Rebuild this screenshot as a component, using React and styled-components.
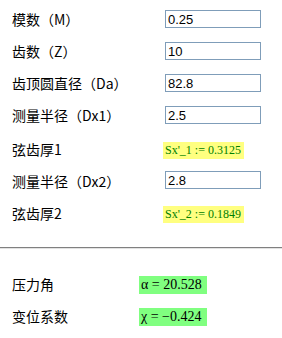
import React from "react";
import styled, { createGlobalStyle } from "styled-components";

const Global = createGlobalStyle`
  html, body { margin: 0; padding: 0; background: #ffffff; }
  body { width: 282px; height: 338px; overflow: hidden; }
`;

const Page = styled.div`
  display: flex;
  flex-direction: column;
  padding-top: 3px;
  width: 282px;
`;

const Row = styled.div`
  display: flex;
  align-items: center;
  height: ${(p) => p.$h}px;
  padding-left: 12px;
`;

const Label = styled.div`
  width: 127px;
  flex: none;
  font-family: "Noto Sans CJK SC", "Liberation Sans", sans-serif;
  font-size: 14px;
  line-height: 18px;
  color: #000;
  margin-top: ${(p) => p.$dy || 0}px;
`;

const Input = styled.input`
  box-sizing: border-box;
  width: 96px;
  height: 18px;
  margin: 0 0 0 26px;
  padding: 0 2px;
  border: 1px solid #7f9db9;
  outline: none;
  background: #fff;
  font-family: "Liberation Sans", Arial, sans-serif;
  font-size: 13px;
  color: #000;
`;

const Result = styled.div`
  box-sizing: border-box;
  display: flex;
  align-items: center;
  height: ${(p) => p.$h}px;
  width: ${(p) => p.$w}px;
  margin-left: ${(p) => p.$indent}px;
  margin-top: ${(p) => p.$dy || 0}px;
  padding: 0 2px;
  background: ${(p) => p.$bg};
  color: ${(p) => p.$fg};
  font-family: "Liberation Serif", "Times New Roman", serif;
  font-size: ${(p) => p.$fs}px;
  white-space: nowrap;
  overflow: hidden;
`;

const Separator = styled.div`
  margin-top: 15px;
  height: 0;
  border-top: 1px solid #808080;
  border-bottom: 1px solid #e2e2e2;
  margin-bottom: 19px;
`;

const inputs = [
  { label: "模数（M）", value: "0.25" },
  { label: "齿数（Z）", value: "10" },
  { label: "齿顶圆直径（Da）", value: "82.8" },
  { label: "测量半径（Dx1）", value: "2.5" },
];

export default function App() {
  return (
    <>
      <Global />
      <Page>
        {inputs.map((r) => (
          <Row key={r.label} $h={32}>
            <Label>{r.label}</Label>
            <Input defaultValue={r.value} />
          </Row>
        ))}
        <Row $h={35}>
          <Label>弦齿厚1</Label>
          <Result $h={17} $w={81} $fs={12} $indent={24} $dy={4} $bg="#ffff80" $fg="#008000">
            Sx'_1 := 0.3125
          </Result>
        </Row>
        <Row $h={28}>
          <Label $dy={2}>测量半径（Dx2）</Label>
          <Input defaultValue="2.8" />
        </Row>
        <Row $h={38}>
          <Label>弦齿厚2</Label>
          <Result $h={17} $w={81} $fs={12} $indent={24} $dy={3} $bg="#ffff80" $fg="#008000">
            Sx'_2 := 0.1849
          </Result>
        </Row>
        <Separator />
        <Row $h={32}>
          <Label>压力角</Label>
          <Result $h={18} $w={68} $fs={14} $indent={0} $dy={2} $bg="#80ff80" $fg="#000">
            α = 20.528
          </Result>
        </Row>
        <Row $h={32}>
          <Label>变位系数</Label>
          <Result $h={18} $w={68} $fs={14} $indent={0} $dy={2} $bg="#80ff80" $fg="#000">
            χ = −0.424
          </Result>
        </Row>
      </Page>
    </>
  );
}
